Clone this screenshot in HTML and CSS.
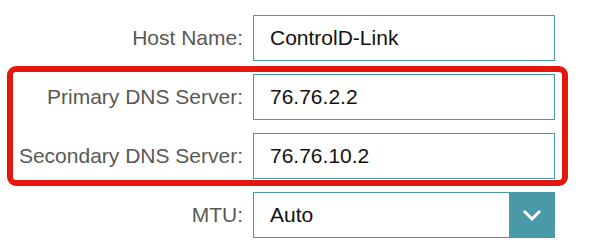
FILE: index.html
```html
<!DOCTYPE html>
<html lang="en">
<head>
    <meta charset="UTF-8">
    <title>Internet settings</title>
    <link rel="stylesheet" href="styles.css">
</head>
<body>

<div class="form">
    <label class="label" for="host">Host Name:</label>
    <div class="field" id="host">ControlD-Link</div>

    <label class="label" for="dns1">Primary DNS Server:</label>
    <div class="field" id="dns1">76.76.2.2</div>

    <label class="label" for="dns2">Secondary DNS Server:</label>
    <div class="field" id="dns2">76.76.10.2</div>

    <label class="label" for="mtu">MTU:</label>
    <div class="select" id="mtu">
        <span class="select-value">Auto</span>
        <span class="select-btn">
            <svg width="20" height="12" viewBox="0 0 20 12">
                <path d="M2 2 L10 10 L18 2" fill="none" stroke="#fff" stroke-width="3"/>
            </svg>
        </span>
    </div>

    <div class="highlight"></div>
</div>

</body>
</html>
```

FILE: styles.css
```css
body {
    margin: 0;
    background: #ffffff;
    font-family: "Liberation Sans", Arial, sans-serif;
}

.form {
    position: relative;
    display: grid;
    grid-template-columns: 243px 302px;
    grid-auto-rows: 46px;
    column-gap: 10px;
    row-gap: 13px;
    padding-top: 15px;
    align-items: center;
}

.label {
    text-align: right;
    font-size: 21px;
    color: #5a5852;
}

.field {
    box-sizing: border-box;
    height: 46px;
    border: 1px solid #4a97a8;
    padding: 0 16px;
    display: flex;
    align-items: center;
    font-size: 21px;
    color: #111111;
}

.select {
    box-sizing: border-box;
    height: 46px;
    border: 1px solid #4a97a8;
    display: flex;
    font-size: 21px;
    color: #111111;
}

.select-value {
    flex: 1;
    display: flex;
    align-items: center;
    padding-left: 16px;
}

.select-btn {
    width: 46px;
    margin: -1px -1px -1px 0;
    background: #4a99a8;
    display: flex;
    align-items: center;
    justify-content: center;
}

/* red annotation box round the DNS rows */
.highlight {
    position: absolute;
    left: 7px;
    top: 66px;
    width: 561px;
    height: 120px;
    box-sizing: border-box;
    border: 6px solid #e3170e;
    border-radius: 9px;
}
```
